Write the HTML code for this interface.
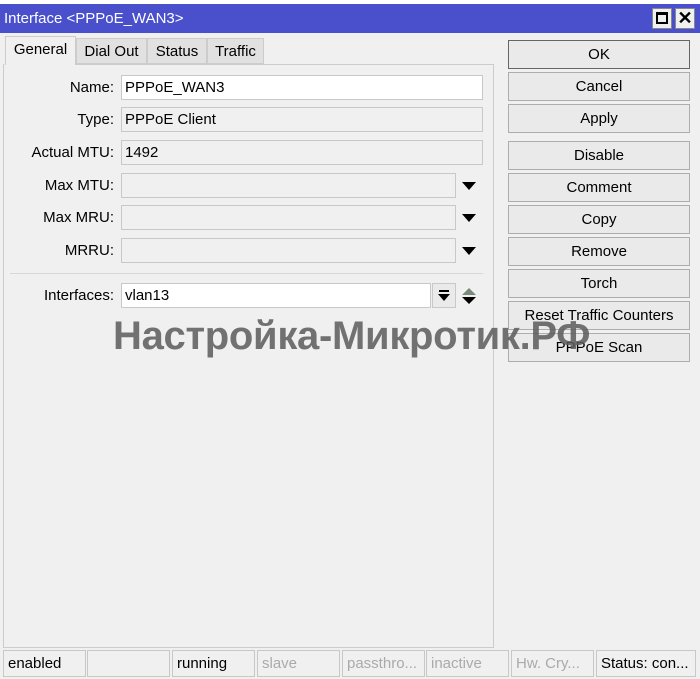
<!DOCTYPE html>
<html><head><style>
*{box-sizing:border-box;margin:0;padding:0}
body{width:700px;height:679px;background:#f0f0f0;font-family:"Liberation Sans",Arial,sans-serif;font-size:15px;color:#000;position:relative;overflow:hidden}
.a{position:absolute}
.title{left:0;top:4px;width:700px;height:29px;background:#4a4fcb;color:#fff;font-size:15px;line-height:29px;padding-left:4px}
.tb{top:8px;width:20px;height:21px;background:#f0f0f0;border:1px solid #888}
.tab{top:38px;height:26px;line-height:25px;background:#e1e1e1;border:1px solid #ccc;text-align:center}
.lbl{text-align:right;width:114px;left:0;line-height:25px}
.f{left:121px;height:25px;border:1px solid #c8c8c8;background:#f0f0f0;line-height:23px;padding-left:3px}
.btn{left:508px;width:182px;height:29px;border:1px solid #adadad;background:#eaeaea;text-align:center;line-height:27px}
.tri{width:0;height:0;border-left:7px solid transparent;border-right:7px solid transparent;border-top:8px solid #000}
.sc{top:650px;height:27px;border:1px solid #c8c8c8;line-height:25px;padding-left:4px;white-space:nowrap;overflow:hidden}
.g{color:#aaa}
</style></head><body>
<div class="a" style="left:0;top:0;width:700px;height:4px;background:#fff"></div>
<div class="a title">Interface &lt;PPPoE_WAN3&gt;</div>
<div class="a tb" style="left:652px"><div class="a" style="left:3px;top:3px;width:12px;height:12px;border:2px solid #000;border-top-width:3px"></div></div>
<div class="a tb" style="left:675px;text-align:center;line-height:19px;font-size:18px;font-weight:bold">✕</div>
<div class="a" style="left:3px;top:64px;width:491px;height:584px;border:1px solid #ccc;border-top:none"></div>
<div class="a tab" style="left:5px;top:36px;width:71px;height:29px;background:#f0f0f0;border-bottom:none">General</div>
<div class="a tab" style="left:76px;width:71px">Dial Out</div>
<div class="a tab" style="left:147px;width:60px">Status</div>
<div class="a tab" style="left:207px;width:57px">Traffic</div>
<div class="a" style="left:76px;top:64px;width:418px;height:1px;background:#ccc"></div>

<div class="a lbl" style="top:75px">Name:</div><div class="a f" style="top:75px;width:362px;background:#fff">PPPoE_WAN3</div>
<div class="a lbl" style="top:107px">Type:</div><div class="a f" style="top:107px;width:362px">PPPoE Client</div>
<div class="a lbl" style="top:140px">Actual MTU:</div><div class="a f" style="top:140px;width:362px">1492</div>
<div class="a lbl" style="top:173px">Max MTU:</div><div class="a f" style="top:173px;width:335px"></div><div class="a tri" style="left:462px;top:182px"></div>
<div class="a lbl" style="top:205px">Max MRU:</div><div class="a f" style="top:205px;width:335px"></div><div class="a tri" style="left:462px;top:214px"></div>
<div class="a lbl" style="top:238px">MRRU:</div><div class="a f" style="top:238px;width:335px"></div><div class="a tri" style="left:462px;top:247px"></div>
<div class="a" style="left:10px;top:273px;width:473px;height:1px;background:#d8d8d8"></div>
<div class="a lbl" style="top:283px">Interfaces:</div><div class="a f" style="top:283px;width:310px;background:#fff">vlan13</div>
<div class="a" style="left:432px;top:283px;width:24px;height:25px;border:1px solid #c8c8c8;background:#eaeaea"><div class="a" style="left:6px;top:6px;width:10px;height:2px;background:#000"></div><div class="a tri" style="left:5px;top:10px;border-left-width:6px;border-right-width:6px;border-top-width:7px"></div></div>
<div class="a tri" style="left:462px;top:288px;border-top:none;border-bottom:7px solid #7a8a7a"></div>
<div class="a tri" style="left:462px;top:297px;border-top-width:7px"></div>

<div class="a btn" style="top:40px;border-color:#666">OK</div>
<div class="a btn" style="top:72px">Cancel</div>
<div class="a btn" style="top:104px">Apply</div>
<div class="a btn" style="top:141px">Disable</div>
<div class="a btn" style="top:173px">Comment</div>
<div class="a btn" style="top:205px">Copy</div>
<div class="a btn" style="top:237px">Remove</div>
<div class="a btn" style="top:269px">Torch</div>
<div class="a btn" style="top:301px">Reset Traffic Counters</div>
<div class="a btn" style="top:333px">PPPoE Scan</div>

<div class="a" style="left:113px;top:314px;font-size:40px;font-weight:bold;color:rgba(90,90,90,0.85);white-space:nowrap;letter-spacing:-0.3px">Настройка-Микротик.РФ</div>

<div class="a sc" style="left:3px;width:83px">enabled</div>
<div class="a sc" style="left:87px;width:83px"></div>
<div class="a sc" style="left:172px;width:83px">running</div>
<div class="a sc g" style="left:257px;width:83px">slave</div>
<div class="a sc g" style="left:342px;width:83px">passthro...</div>
<div class="a sc g" style="left:426px;width:83px">inactive</div>
<div class="a sc g" style="left:511px;width:83px">Hw. Cry...</div>
<div class="a sc" style="left:596px;width:100px">Status: con...</div>
</body></html>
